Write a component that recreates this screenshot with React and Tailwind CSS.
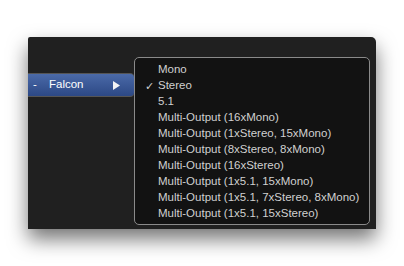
import React from 'react';

const items = [
  'Mono',
  'Stereo',
  '5.1',
  'Multi-Output (16xMono)',
  'Multi-Output (1xStereo, 15xMono)',
  'Multi-Output (8xStereo, 8xMono)',
  'Multi-Output (16xStereo)',
  'Multi-Output (1x5.1, 15xMono)',
  'Multi-Output (1x5.1, 7xStereo, 8xMono)',
  'Multi-Output (1x5.1, 15xStereo)',
];

export default function App() {
  return (
    <div className="w-[404px] h-[266px] bg-white overflow-hidden pt-[37px] pl-[28px]" style={{ fontFamily: '"Liberation Sans", Arial, sans-serif' }}>
      <div className="w-[348px] h-[192px] bg-[#202020] rounded-tr-[5px] rounded-tl-[2px] shadow-[0_10px_20px_rgba(0,0,0,0.55)] flex">
        {/* linke Spalte */}
        <div className="w-[106px] pt-[36px]">
          <div className="h-[24px] border-y border-[#555] bg-gradient-to-b from-[#4b6aa8] to-[#2c4885] flex items-center text-white text-[11.5px] rounded-r-[4px]">
            <span className="w-[21px] pl-[5px]">-</span>
            <span className="flex-1">Falcon</span>
            <svg width="7" height="9" viewBox="0 0 7 9" className="mr-[14px]">
              <path d="M0 0 L7 4.5 L0 9 Z" fill="#f4f4f4" />
            </svg>
          </div>
        </div>
        {/* Menü */}
        <div className="mt-[20px] w-[236px] h-[168px] bg-[#121212] border border-[#8a8a8a] rounded-[5px] pt-[4px] pb-[2px]">
          {items.map((label) => (
            <div key={label} className="h-[16px] flex items-center text-[11.5px] text-[#d0d0d0] whitespace-nowrap">
              <span className="w-[23px] pl-[10px] text-[11px]">{label === 'Stereo' ? '✓' : ''}</span>
              <span>{label}</span>
            </div>
          ))}
        </div>
      </div>
    </div>
  );
}
